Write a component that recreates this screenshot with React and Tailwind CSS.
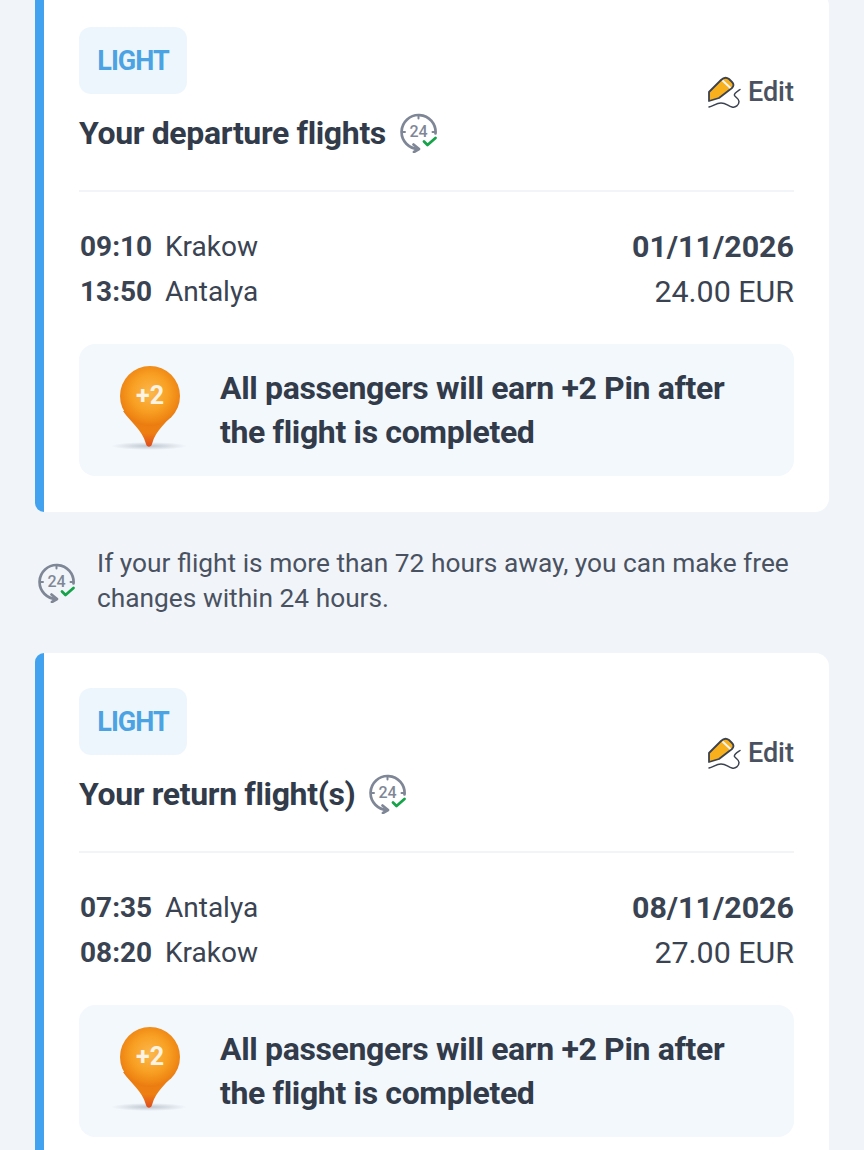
const font = { fontFamily: "Roboto, sans-serif" };

function Free24({ className }) {
  return (
    <svg viewBox="0 0 38 40" className={className} fill="none">
      <path d="M35.5 20.5A17 17 0 1 0 18.5 36" stroke="#7f8797" strokeWidth="2.7" strokeLinecap="round" />
      <path d="M13.5 31.5L19 36L14 39" stroke="#7f8797" strokeWidth="2.7" strokeLinecap="round" strokeLinejoin="round" />
      <path d="M18.5 2.5V5.5M2 19H5M32.5 19H35.5" stroke="#7f8797" strokeWidth="2" strokeLinecap="round" />
      <text x="18.5" y="24" textAnchor="middle" fontFamily="Roboto, sans-serif" fontSize="16" fontWeight="500" fill="#7f8797">24</text>
      <path d="M24 28.5L27.5 32L35.5 25" stroke="#16a34a" strokeWidth="2.8" strokeLinecap="round" strokeLinejoin="round" />
    </svg>
  );
}

function EditIcon() {
  return (
    <svg viewBox="0 0 38 34" className="w-[38px] h-[34px]" fill="none">
      <path d="M3 16L15 4Q19 0 23 3L26 6Q29 9 26 12L13 22L3 25Z" fill="#f8b01c" stroke="#3b4250" strokeWidth="1.8" strokeLinejoin="round" />
      <path d="M16.5 4.5L24.5 12" stroke="#f4f5f7" strokeWidth="2" />
      <path d="M34 13.5C31 15.5 27.5 17.5 28.5 19.5C29.5 21.5 33 22.5 33 25.5C33 29 29.5 32 26 31C22 30 20 27 15 27C10 27 7 30.5 3 31" stroke="#3b4250" strokeWidth="1.5" strokeLinecap="round" />
    </svg>
  );
}

function PinBadge({ id }) {
  return (
    <svg viewBox="0 0 80 90" className="w-[80px] h-[90px]">
      <defs>
        <radialGradient id={`${id}-body`} cx="50%" cy="45%" r="55%">
          <stop offset="0%" stopColor="#fbb84e" />
          <stop offset="55%" stopColor="#f8a023" />
          <stop offset="88%" stopColor="#ef8614" />
          <stop offset="100%" stopColor="#ea7a10" />
        </radialGradient>
        <linearGradient id={`${id}-tip`} x1="0" y1="0" x2="0" y2="1">
          <stop offset="0%" stopColor="#ea7a10" />
          <stop offset="62%" stopColor="#ee8012" />
          <stop offset="100%" stopColor="#e04c1c" />
        </linearGradient>
        <radialGradient id={`${id}-shadow`}>
          <stop offset="0%" stopColor="#8b93a0" stopOpacity="0.5" />
          <stop offset="100%" stopColor="#8b93a0" stopOpacity="0" />
        </radialGradient>
      </defs>
      <ellipse cx="40" cy="81" rx="38" ry="4" fill={`url(#${id}-shadow)`} />
      <path d="M14 46C22 58 33 64 37 79C37.8 82.5 42.2 82.5 43 79C47 64 58 58 66 46Z" fill={`url(#${id}-tip)`} />
      <circle cx="41" cy="31" r="30" fill={`url(#${id}-body)`} />
      <text x="41" y="38.5" textAnchor="middle" fontFamily="Roboto, sans-serif" fontSize="25" fontWeight="700" fill="#fdf3e2">+2</text>
    </svg>
  );
}

function FlightCard({ title, date, price, rows, id }) {
  return (
    <div className="bg-white rounded-l-[9px] rounded-r-[14px] border-l-[9px] border-[#42a2f0] pl-[35px] pr-[35px] pt-[35px] pb-[36px]">
      <div className="flex items-center justify-between border-b-2 border-[#f2f5f8] pb-[37px]">
        <div>
          <div className="w-[108px] h-[67px] rounded-xl bg-[#eef6fd] flex items-center justify-center text-[#4ba3e3] text-[27px] font-bold tracking-[-1px] pt-[2px]">LIGHT</div>
          <div className="flex items-center mt-[19px] h-[40px]">
            <span className="text-[32px] font-bold text-[#323b4a] tracking-[-0.35px]">{title}</span>
            <Free24 className="w-[38px] h-[40px] ml-[14px]" />
          </div>
        </div>
        <div className="flex items-center gap-[4px] text-[27px] font-medium text-[#4a5261] pt-[5px]">
          <EditIcon />
          <span>Edit</span>
        </div>
      </div>
      <div className="flex justify-between mt-[32px] text-[28px] leading-[45px] text-[#3a4352]">
        <div>
          {rows.map((r) => (
            <div key={r[0]} className="flex">
              <span className="font-bold w-[86px] pl-px">{r[0]}</span>
              <span>{r[1]}</span>
            </div>
          ))}
        </div>
        <div className="text-right text-[30.4px]">
          <div className="font-bold">{date}</div>
          <div>{price}</div>
        </div>
      </div>
      <div className="flex items-center mt-[30px] h-[132px] rounded-2xl bg-[#f3f8fd] pl-[30px] pr-[30px]">
        <PinBadge id={id} />
        <div className="ml-[31px] text-[32px] leading-[44px] font-bold text-[#323b4a] tracking-[-0.35px]">
          All passengers will earn +2 Pin after<br />the flight is completed
        </div>
      </div>
    </div>
  );
}

export default function App() {
  return (
    <div style={font} className="h-[1150px] overflow-hidden bg-[#f1f5f9] px-[35px]">
      <div className="-mt-[8px]">
        <FlightCard
          id="dep"
          title="Your departure flights"
          date="01/11/2026"
          price="24.00 EUR"
          rows={[["09:10", "Krakow"], ["13:50", "Antalya"]]}
        />
      </div>
      <div className="flex items-center h-[141px] pl-[3px] text-[26.3px] leading-[35px] text-[#4a5261]">
        <Free24 className="w-[38px] h-[40px] shrink-0 mr-[21px]" />
        <p className="pb-[4px]">If your flight is more than 72 hours away, you can make free<br />changes within 24 hours.</p>
      </div>
      <FlightCard
        id="ret"
        title="Your return flight(s)"
        date="08/11/2026"
        price="27.00 EUR"
        rows={[["07:35", "Antalya"], ["08:20", "Krakow"]]}
      />
    </div>
  );
}
